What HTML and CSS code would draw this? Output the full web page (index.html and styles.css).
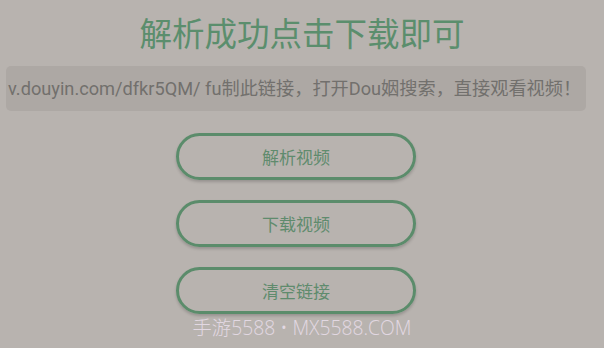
FILE: index.html
```html
<!DOCTYPE html>
<html lang="zh">
<head>
<meta charset="utf-8">
<link rel="stylesheet" href="styles.css">
</head>
<body>
<div class="page">
  <h1 class="title">解析成功点击下载即可</h1>
  <div class="link-box">v.douyin.com/dfkr5QM/ fu制此链接，打开Dou姻搜索，直接观看视频！</div>
  <div class="actions">
    <div class="btn">解析视频</div>
    <div class="btn">下载视频</div>
    <div class="btn">清空链接</div>
  </div>
  <div class="watermark">手游5588 • MX5588.COM</div>
</div>
</body>
</html>
```
FILE: styles.css
```css
html, body {
  margin: 0;
  padding: 0;
  background: #b8b3af;
}
.page {
  position: relative;
  width: 604px;
  height: 348px;
  overflow: hidden;
  font-family: Roboto, "Noto Sans CJK SC", sans-serif;
}
.title {
  margin: 0;
  padding-top: 14px;
  font-size: 32.5px;
  line-height: 42px;
  font-weight: normal;
  color: #5b8e6d;
  text-align: center;
}
.link-box {
  margin: 10px 18px 0 6px;
  height: 45px;
  line-height: 45px;
  padding-left: 2px;
  background: #ada8a4;
  border-radius: 5px;
  color: #72706d;
  font-size: 18.2px;
  white-space: nowrap;
  overflow: hidden;
}
.actions {
  display: flex;
  flex-direction: column;
  gap: 20px;
  margin: 22px 0 0 176px;
}
.btn {
  box-sizing: border-box;
  width: 240px;
  height: 47px;
  border: 3px solid #5b8c6b;
  border-radius: 24px;
  box-shadow: 0 2px 3px rgba(0, 0, 0, 0.18);
  color: #5f8b6d;
  font-size: 17px;
  display: flex;
  align-items: center;
  justify-content: center;
}
.watermark {
  position: absolute;
  left: 0;
  right: 0;
  top: 313px;
  text-align: center;
  font-size: 19.3px;
  font-weight: 300;
  color: #e2d8e2;
  font-family: "Open Sans", "Noto Sans CJK SC", sans-serif;
}
```
